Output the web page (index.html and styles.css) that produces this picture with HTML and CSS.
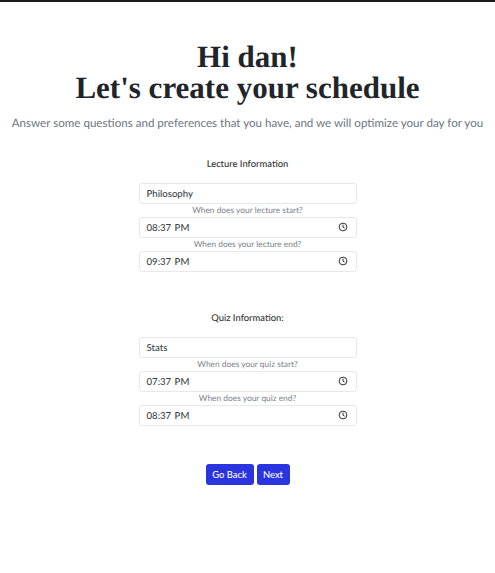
FILE: index.html
```html
<!DOCTYPE html>
<html lang="en">
<head>
<meta charset="utf-8">
<title>Schedule</title>
<link rel="stylesheet" href="styles.css">
</head>
<body>
<main class="page">
  <h1 class="title">Hi dan!<br>Let's create your schedule</h1>
  <p class="subtitle">Answer some questions and preferences that you have, and we will optimize your day for you</p>

  <section class="group">
    <h2 class="group-title">Lecture Information</h2>
    <div class="field">Philosophy</div>
    <label class="hint">When does your lecture start?</label>
    <div class="field time">08:37 PM<svg class="clock" viewBox="0 0 16 16"><circle cx="8" cy="8" r="6.2"/><path d="M8 4.2V8.3L10.6 9.8"/></svg></div>
    <label class="hint">When does your lecture end?</label>
    <div class="field time">09:37 PM<svg class="clock" viewBox="0 0 16 16"><circle cx="8" cy="8" r="6.2"/><path d="M8 4.2V8.3L10.6 9.8"/></svg></div>
  </section>

  <section class="group quiz">
    <h2 class="group-title">Quiz Information:</h2>
    <div class="field">Stats</div>
    <label class="hint">When does your quiz start?</label>
    <div class="field time">07:37 PM<svg class="clock" viewBox="0 0 16 16"><circle cx="8" cy="8" r="6.2"/><path d="M8 4.2V8.3L10.6 9.8"/></svg></div>
    <label class="hint">When does your quiz end?</label>
    <div class="field time">08:37 PM<svg class="clock" viewBox="0 0 16 16"><circle cx="8" cy="8" r="6.2"/><path d="M8 4.2V8.3L10.6 9.8"/></svg></div>
  </section>

  <div class="actions">
    <button class="btn">Go Back</button>
    <button class="btn">Next</button>
  </div>
</main>
</body>
</html>
```
FILE: styles.css
```css
* { box-sizing: border-box; }
html, body { margin: 0; height: 100%; }
body {
  background: #fff;
  font-family: "Lato", "Open Sans", sans-serif;
  color: #212529;
  overflow: hidden;
  text-rendering: geometricPrecision;
}
.page {
  border-top: 2px solid #1a1a1a;
  padding-top: 39px;
  display: flex;
  flex-direction: column;
  align-items: center;
}
.title {
  margin: 0;
  font-family: "Liberation Serif", serif;
  font-weight: 700;
  font-size: 31px;
  line-height: 31px;
  text-align: center;
  color: #212529;
}
.subtitle {
  margin: 11px 0 0;
  font-size: 11.6px;
  line-height: 20px;
  color: #6c757d;
  text-align: center;
  white-space: nowrap;
}
.group {
  width: 218px;
  margin-top: 23px;
  display: flex;
  flex-direction: column;
}
.quiz { margin-top: 39px; }
.group-title {
  margin: 0 0 10px;
  font-size: 9.4px;
  line-height: 16px;
  font-weight: 500;
  text-align: center;
  color: #333;
}
.field {
  height: 21px;
  padding: 1px 8px 0 7px;
  border: 1px solid #e6e8eb;
  border-radius: 3px;
  display: flex;
  align-items: center;
  justify-content: space-between;
  font-size: 9.6px;
  font-weight: 500;
  color: #3a3f45;
}
.time { word-spacing: 1px; }
.hint {
  height: 13px;
  line-height: 13px;
  font-size: 8.4px;
  color: #7b838a;
  text-align: center;
}
.clock {
  width: 10px;
  height: 10px;
  margin-top: -3px;
  fill: none;
  stroke: #333;
  stroke-width: 1.6;
}
.actions {
  margin-top: 38px;
  display: flex;
  gap: 3px;
}
.btn {
  height: 21px;
  width: 48px;
  padding: 0;
  border: 0;
  border-radius: 3px;
  background: #2a35df;
  color: #fff;
  font-family: inherit;
  font-size: 9.4px;
  font-weight: 500;
}
.btn:last-child { width: 33px; }
```
